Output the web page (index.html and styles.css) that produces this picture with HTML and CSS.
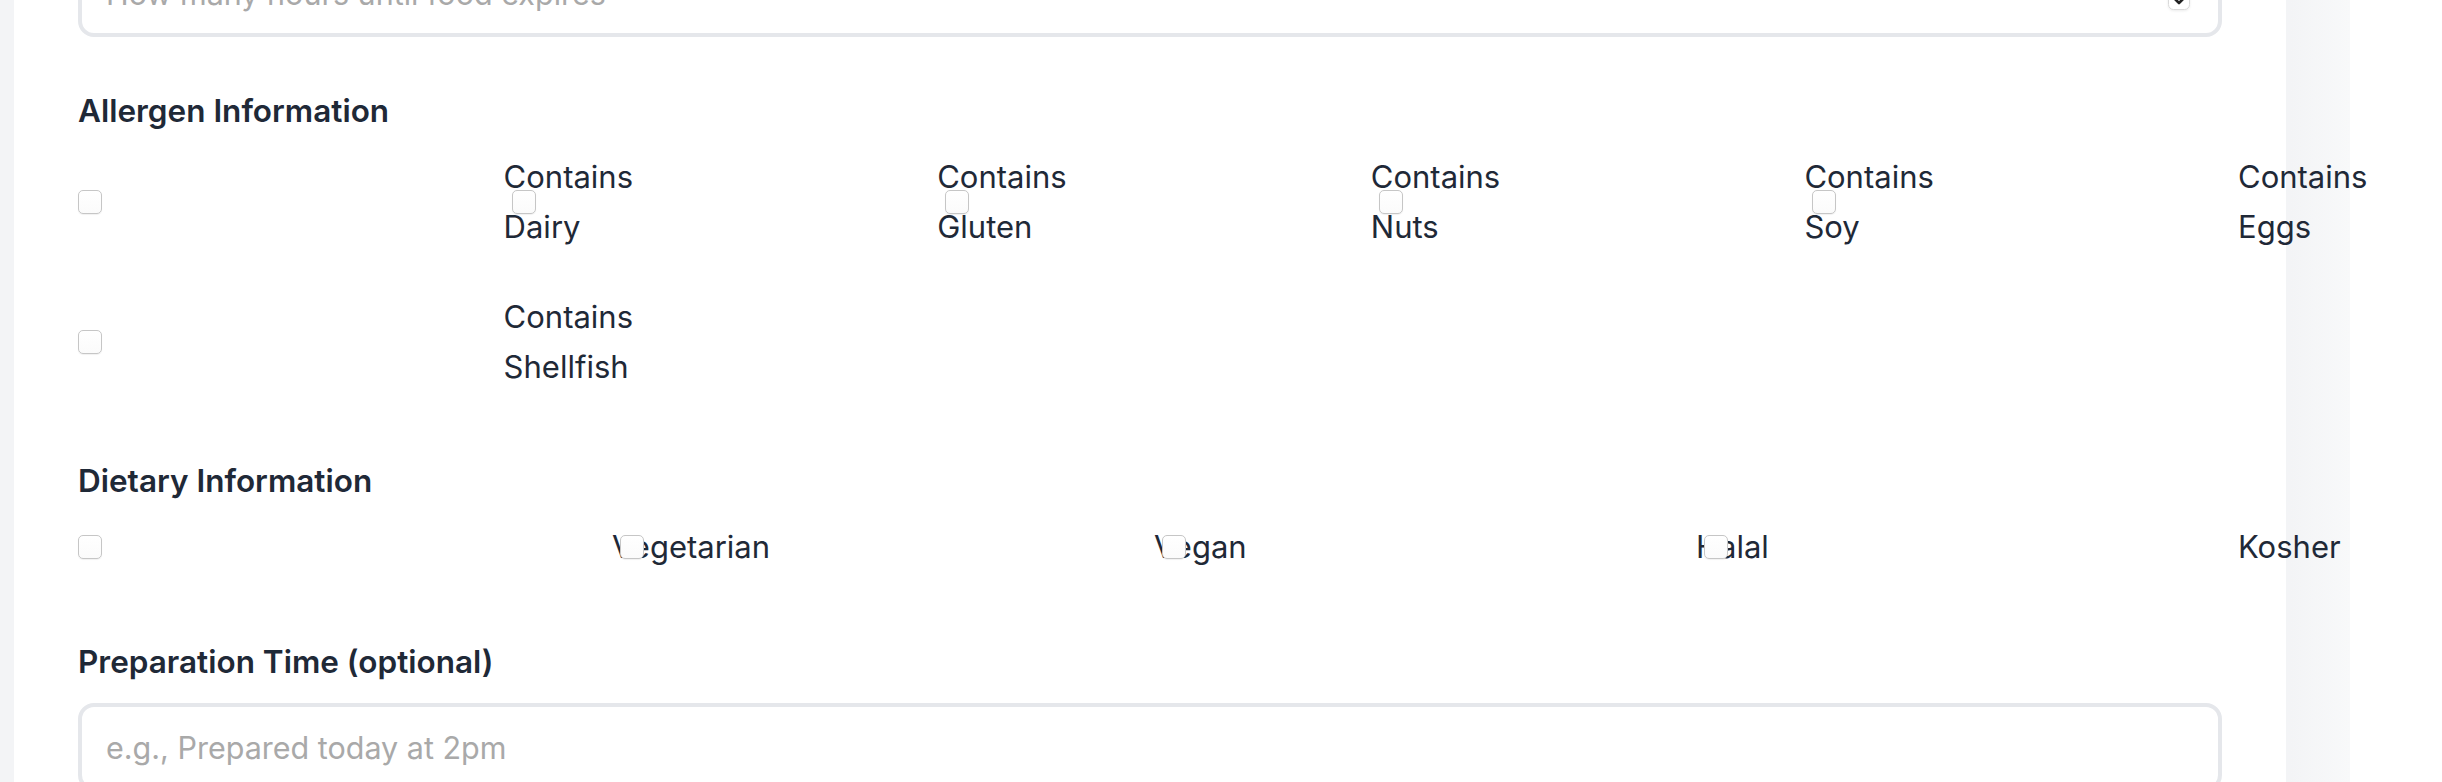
FILE: index.html
```html
<!DOCTYPE html>
<html lang="en">
<head>
<meta charset="utf-8">
<title>Food listing form</title>
<link rel="stylesheet" href="styles.css">
</head>
<body>
<div class="page">
  <form class="card">
    <div class="select-wrap">
      <select class="control select">
        <option>How many hours until food expires</option>
      </select>
      <svg class="select-arrow" width="22" height="34" viewBox="0 0 22 34" aria-hidden="true">
        <rect x="0.5" y="0.5" width="21" height="33" rx="5" fill="#fff" stroke="#dadada"/>
        <path d="M6 10 L11 5 L16 10" fill="none" stroke="#222" stroke-width="2.4" stroke-linecap="round" stroke-linejoin="round"/>
        <path d="M6 22 L11 27 L16 22" fill="none" stroke="#222" stroke-width="2.6" stroke-linecap="round" stroke-linejoin="round"/>
      </svg>
    </div>

    <div class="field field-allergen">
      <span class="field-label">Allergen Information</span>
      <div class="checks checks-5">
        <label class="check"><span class="cb-wrap"><input type="checkbox" class="cb"></span><span class="cb-text">Contains Dairy</span></label>
        <label class="check"><span class="cb-wrap"><input type="checkbox" class="cb"></span><span class="cb-text">Contains Gluten</span></label>
        <label class="check"><span class="cb-wrap"><input type="checkbox" class="cb"></span><span class="cb-text">Contains Nuts</span></label>
        <label class="check"><span class="cb-wrap"><input type="checkbox" class="cb"></span><span class="cb-text">Contains Soy</span></label>
        <label class="check"><span class="cb-wrap"><input type="checkbox" class="cb"></span><span class="cb-text">Contains Eggs</span></label>
        <label class="check"><span class="cb-wrap"><input type="checkbox" class="cb"></span><span class="cb-text">Contains Shellfish</span></label>
      </div>
    </div>

    <div class="field field-dietary">
      <span class="field-label">Dietary Information</span>
      <div class="checks checks-4">
        <label class="check"><span class="cb-wrap"><input type="checkbox" class="cb"></span><span class="cb-text">Vegetarian</span></label>
        <label class="check"><span class="cb-wrap"><input type="checkbox" class="cb"></span><span class="cb-text">Vegan</span></label>
        <label class="check"><span class="cb-wrap"><input type="checkbox" class="cb"></span><span class="cb-text">Halal</span></label>
        <label class="check"><span class="cb-wrap"><input type="checkbox" class="cb"></span><span class="cb-text">Kosher</span></label>
      </div>
    </div>

    <div class="field field-prep">
      <label class="field-label" for="prep">Preparation Time (optional)</label>
      <input id="prep" class="control input" type="text" placeholder="e.g., Prepared today at 2pm">
    </div>
  </form>
</div>
</body>
</html>
```

FILE: styles.css
```css
html, body {
  margin: 0;
  padding: 0;
  background: #ffffff;
  overflow: hidden;
}

body {
  font-family: Inter, "Noto Sans", "Liberation Sans", sans-serif;
  color: #1f2937;
}

.page {
  width: 2350px;
  height: 782px;
  box-sizing: border-box;
  padding-left: 14px;
  display: flex;
  background: linear-gradient(90deg, #f3f4f6 0, #f3f4f6 2290px, #f8f9fa 2350px);
}

.card {
  width: 2272px;
  flex: none;
  box-sizing: border-box;
  padding: 0 64px;
  background: #ffffff;
  margin: 0;
}

.select-wrap {
  position: relative;
  margin-top: -51px;
}

.control {
  display: block;
  width: 100%;
  box-sizing: border-box;
  border: 4px solid #e5e7eb;
  border-radius: 16px;
  background: #ffffff;
  font-family: Inter, "Noto Sans", "Liberation Sans", sans-serif;
  font-size: 30.5px;
  color: #a9a9a9;
  outline: none;
  margin: 0;
}

.select {
  -webkit-appearance: none;
  appearance: none;
  height: 88px;
  padding: 0 24px;
}

.select-arrow {
  position: absolute;
  right: 32px;
  top: 27px;
  filter: drop-shadow(0 1px 1px rgba(0, 0, 0, 0.08));
}

.input {
  height: 88px;
  padding: 16px 24px;
  line-height: 48px;
  color: #1f2937;
}

.input::placeholder {
  color: #a9a9a9;
  opacity: 1;
}

.field-allergen {
  margin-top: 54px;
}

.field-dietary {
  margin-top: 69px;
}

.field-prep {
  margin-top: 70px;
}

.field-label {
  display: block;
  font-size: 31.5px;
  line-height: 40px;
  font-weight: 600;
  color: #1f2937;
  margin-bottom: 21px;
}

.checks {
  display: grid;
  column-gap: 24px;
  row-gap: 40px;
}

.checks-5 {
  grid-template-columns: repeat(5, minmax(0, 1fr));
}

.checks-4 {
  grid-template-columns: repeat(4, minmax(0, 1fr));
}

.check {
  display: flex;
  align-items: center;
  font-size: 31px;
  line-height: 50px;
  color: #1f2937;
  min-width: 0;
}

.cb-wrap {
  flex: 0 0 100%;
  display: flex;
  align-items: center;
}

.cb {
  -webkit-appearance: none;
  appearance: none;
  width: 24px;
  height: 24px;
  margin: 0;
  box-sizing: border-box;
  border: 1px solid #c6c6c6;
  border-radius: 5px;
  background: linear-gradient(#ffffff, #fbfbfb);
  box-shadow: 0 1px 1px rgba(0, 0, 0, 0.06);
}

.cb-text {
  flex: none;
  width: min-content;
  margin-left: 16px;
}
```
